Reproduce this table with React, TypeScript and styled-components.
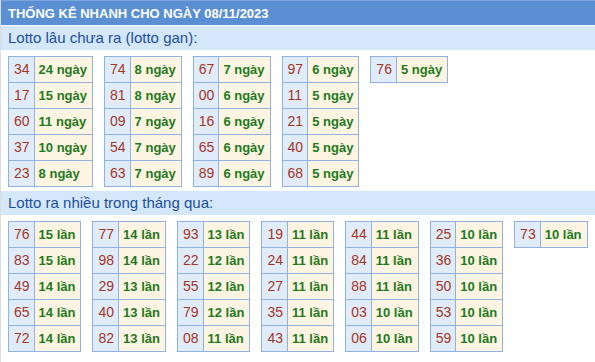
import styled, { createGlobalStyle } from "styled-components";

// Dữ liệu thống kê: mỗi bảng là một cột gồm các cặp [số, giá trị]
type Pair = [string, number];

const lottoGan: Pair[][] = [
  [["34", 24], ["17", 15], ["60", 11], ["37", 10], ["23", 8]],
  [["74", 8], ["81", 8], ["09", 7], ["54", 7], ["63", 7]],
  [["67", 7], ["00", 6], ["16", 6], ["65", 6], ["89", 6]],
  [["97", 6], ["11", 5], ["21", 5], ["40", 5], ["68", 5]],
  [["76", 5]],
];

const lottoNhieu: Pair[][] = [
  [["76", 15], ["83", 15], ["49", 14], ["65", 14], ["72", 14]],
  [["77", 14], ["98", 14], ["29", 13], ["40", 13], ["82", 13]],
  [["93", 13], ["22", 12], ["55", 12], ["79", 12], ["08", 11]],
  [["19", 11], ["24", 11], ["27", 11], ["35", 11], ["43", 11]],
  [["44", 11], ["84", 11], ["88", 11], ["03", 10], ["06", 10]],
  [["25", 10], ["36", 10], ["50", 10], ["53", 10], ["59", 10]],
  [["73", 10]],
];

function StatGroup({ data, unit }: { data: Pair[][]; unit: string }) {
  return (
    <TableRow>
      {data.map((col, i) => (
        <StatTable key={i}>
          <tbody>
            {col.map(([num, val]) => (
              <tr key={num}>
                <NumCell>{num}</NumCell>
                <ValueCell>
                  {val} {unit}
                </ValueCell>
              </tr>
            ))}
          </tbody>
        </StatTable>
      ))}
    </TableRow>
  );
}

export default function App() {
  return (
    <>
      <GlobalStyle />
      <Box>
        <Title>THỐNG KÊ NHANH CHO NGÀY 08/11/2023</Title>
        <SectionTitle>Lotto lâu chưa ra (lotto gan):</SectionTitle>
        <StatGroup data={lottoGan} unit="ngày" />
        <SectionTitle>Lotto ra nhiều trong tháng qua:</SectionTitle>
        <StatGroup data={lottoNhieu} unit="lần" />
      </Box>
    </>
  );
}

const GlobalStyle = createGlobalStyle`
  body {
    margin: 0;
    background: #fff;
    font-family: "Liberation Sans", Arial, sans-serif;
  }
`;

const Box = styled.div`
  border-left: 1px solid #dcdcdc;
  min-height: 362px;
  box-sizing: border-box;
`;

const Title = styled.div`
  height: 25px;
  line-height: 25px;
  padding-left: 7px;
  background-color: #5a8fd3;
  border-top: 1px solid #78a5dd;
  box-sizing: border-box;
  color: #fff;
  font-weight: bold;
  font-size: 13px;
  margin-bottom: 1px;
`;

const SectionTitle = styled.div`
  height: 24px;
  line-height: 24px;
  padding-left: 7px;
  background-color: #d5e7fb;
  color: #1b4f9e;
  font-size: 15px;
`;

const TableRow = styled.div`
  display: flex;
  align-items: flex-start;
  gap: 11px;
  padding: 6px 7px 4px;
`;

const StatTable = styled.table`
  border-collapse: collapse;
  font-size: 13px;
  line-height: 15px;

  td {
    border: 1px solid #8fb2e3;
    padding-top: 5px;
    padding-bottom: 5px;
    white-space: nowrap;
  }
`;

const NumCell = styled.td`
  background-color: #e1ecfb;
  color: #a3361f;
  font-size: 14px;
  padding-left: 5px;
  padding-right: 4px;
`;

const ValueCell = styled.td`
  background-color: #fef4e2;
  color: #1d7a1d;
  font-weight: bold;
  padding-left: 4px;
  padding-right: 5px;
`;
